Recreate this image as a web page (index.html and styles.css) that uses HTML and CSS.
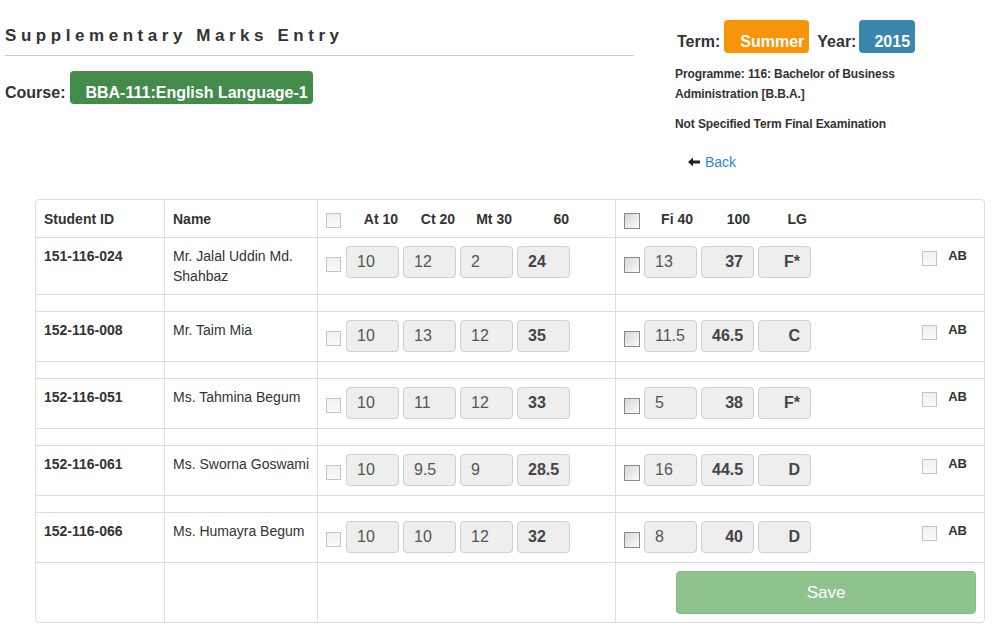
FILE: index.html
```html
<!DOCTYPE html>
<html>
<head>
<meta charset="utf-8">
<title>Supplementary Marks Entry</title>
<link rel="stylesheet" href="styles.css">
</head>
<body>
<div class="top">
  <div class="left">
    <h1 class="title">Supplementary Marks Entry</h1>
    <div class="course-row">
      <span class="course-label">Course:</span>
      <span class="badge badge-green">BBA-111:English Language-1</span>
    </div>
  </div>
  <div class="right">
    <div class="term-row">
      <span class="meta-label">Term:</span>
      <span class="badge badge-orange">Summer</span>
      <span class="meta-label year">Year:</span>
      <span class="badge badge-blue">2015</span>
    </div>
    <p class="info">Programme: 116: Bachelor of Business Administration [B.B.A.]</p>
    <p class="info exam">Not Specified Term Final Examination</p>
    <a class="back" href="#"><svg class="arrow" width="12" height="10" viewBox="0 0 12 10"><path d="M0 5 L5 0.5 L5 3.5 L12 3.5 L12 6.5 L5 6.5 L5 9.5 Z" fill="#222"/></svg>Back</a>
  </div>
</div>

<div class="table-wrap">
<table class="marks">
  <tr class="head">
    <th class="c1">Student ID</th>
    <th class="c2">Name</th>
    <th class="c3">
      <div class="cells">
        <span class="cb light"></span>
        <span class="hl">At 10</span><span class="hl">Ct 20</span><span class="hl">Mt 30</span><span class="hl">60</span>
      </div>
    </th>
    <th class="c4">
      <div class="cells">
        <span class="cb dark"></span>
        <span class="hl hl4">Fi 40</span><span class="hl hl4">100</span><span class="hl hl4">LG</span>
      </div>
    </th>
  </tr>

  <tr>
    <td class="sid">151-116-024</td>
    <td>Mr. Jalal Uddin Md. Shahbaz</td>
    <td><div class="cells"><span class="cb light mid"></span><span class="in">10</span><span class="in">12</span><span class="in">2</span><span class="in b">24</span></div></td>
    <td><div class="cells"><span class="cb dark mid"></span><span class="in">13</span><span class="in b r">37</span><span class="in b r">F*</span><span class="ab"><span class="cb light"></span><span class="ab-text">AB</span></span></div></td>
  </tr>
  <tr class="sep"><td></td><td></td><td></td><td></td></tr>

  <tr>
    <td class="sid">152-116-008</td>
    <td>Mr. Taim Mia</td>
    <td><div class="cells"><span class="cb light mid"></span><span class="in">10</span><span class="in">13</span><span class="in">12</span><span class="in b">35</span></div></td>
    <td><div class="cells"><span class="cb dark mid"></span><span class="in">11.5</span><span class="in b r">46.5</span><span class="in b r">C</span><span class="ab"><span class="cb light"></span><span class="ab-text">AB</span></span></div></td>
  </tr>
  <tr class="sep"><td></td><td></td><td></td><td></td></tr>

  <tr>
    <td class="sid">152-116-051</td>
    <td>Ms. Tahmina Begum</td>
    <td><div class="cells"><span class="cb light mid"></span><span class="in">10</span><span class="in">11</span><span class="in">12</span><span class="in b">33</span></div></td>
    <td><div class="cells"><span class="cb dark mid"></span><span class="in">5</span><span class="in b r">38</span><span class="in b r">F*</span><span class="ab"><span class="cb light"></span><span class="ab-text">AB</span></span></div></td>
  </tr>
  <tr class="sep"><td></td><td></td><td></td><td></td></tr>

  <tr>
    <td class="sid">152-116-061</td>
    <td class="nw">Ms. Sworna Goswami</td>
    <td><div class="cells"><span class="cb light mid"></span><span class="in">10</span><span class="in">9.5</span><span class="in">9</span><span class="in b">28.5</span></div></td>
    <td><div class="cells"><span class="cb dark mid"></span><span class="in">16</span><span class="in b r">44.5</span><span class="in b r">D</span><span class="ab"><span class="cb light"></span><span class="ab-text">AB</span></span></div></td>
  </tr>
  <tr class="sep"><td></td><td></td><td></td><td></td></tr>

  <tr>
    <td class="sid">152-116-066</td>
    <td>Ms. Humayra Begum</td>
    <td><div class="cells"><span class="cb light mid"></span><span class="in">10</span><span class="in">10</span><span class="in">12</span><span class="in b">32</span></div></td>
    <td><div class="cells"><span class="cb dark mid"></span><span class="in">8</span><span class="in b r">40</span><span class="in b r">D</span><span class="ab"><span class="cb light"></span><span class="ab-text">AB</span></span></div></td>
  </tr>

  <tr class="last">
    <td></td><td></td><td></td>
    <td><div class="save-row"><button class="save" type="button">Save</button></div></td>
  </tr>
</table>
</div>
</body>
</html>
```

FILE: styles.css
```css
* { box-sizing: border-box; }
html, body { margin: 0; padding: 0; background: #fff; }
body {
  font-family: "Liberation Sans", Arial, sans-serif;
  font-size: 14px;
  line-height: 20px;
  color: #333;
}

.top {
  display: flex;
  align-items: flex-start;
}
.left {
  width: 629px;
  margin-left: 5px;
}
.title {
  margin: 25px 0 0 0;
  padding-bottom: 8px;
  font-size: 17px;
  line-height: 22px;
  font-weight: bold;
  letter-spacing: 4.55px;
  color: #333;
  border-bottom: 1px solid #ccc;
}
.course-row {
  display: flex;
  align-items: baseline;
  margin-top: 15px;
}
.course-label {
  font-size: 16px;
  font-weight: bold;
  margin-right: 5px;
}
.badge {
  display: inline-block;
  height: 33px;
  line-height: 23px;
  padding: 10px 5px 0 15px;
  border-radius: 4px;
  color: #fff;
  font-size: 16px;
  font-weight: bold;
}
.badge-green { background: #438b4a; }
.badge-orange { background: #f8940a; padding-left: 16px; }
.badge-blue { background: #3a87ad; }

.right {
  margin-left: 41px;
  padding-top: 20px;
}
.term-row {
  display: flex;
  align-items: baseline;
  padding-left: 2px;
}
.meta-label {
  font-size: 16px;
  font-weight: bold;
  margin-right: 4px;
}
.meta-label.year { margin-left: 8px; margin-right: 3px; }
.info {
  margin: 11px 0 0 0;
  font-size: 12px;
  font-weight: bold;
  line-height: 20px;
  width: 240px;
  letter-spacing: -0.1px;
}
.info.exam { margin-top: 10px; }
.back {
  display: inline-flex;
  align-items: center;
  margin: 18px 0 0 13px;
  color: #2a8ad2;
  text-decoration: none;
  font-size: 14px;
  line-height: 20px;
}
.arrow { margin-right: 5px; }

.table-wrap {
  padding: 27px 0 0 35px;
}
.marks {
  width: 950px;
  table-layout: fixed;
  border-collapse: separate;
  border-spacing: 0;
  border: 1px solid #ddd;
  border-radius: 4px;
}
.marks th, .marks td {
  padding: 8px;
  text-align: left;
  vertical-align: top;
  border-left: 1px solid #ddd;
  border-top: 1px solid #ddd;
  line-height: 20px;
  font-size: 14px;
}
.marks th:first-child, .marks td:first-child { border-left: none; }
.marks tr:first-child th { border-top: none; padding-top: 9px; }
.marks th { font-weight: bold; }
.c1 { width: 128px; }
.c2 { width: 153px; }
.c3 { width: 298px; }
.sid { font-weight: bold; }
.nw { white-space: nowrap; }

.cells {
  display: flex;
  align-items: flex-start;
  min-height: 33px;
}
.head .cells { min-height: 20px; }
.cb {
  display: inline-block;
  width: 15px;
  height: 15px;
  margin-top: 5px;
  margin-right: 5px;
  flex: none;
}
.head .cb { margin-top: 4px; }
.cb.light {
  border: 1px solid #c4c4c4;
  background: linear-gradient(#f0f0f0, #fafafa);
}
.cb.dark {
  width: 16px;
  height: 16px;
  margin-right: 4px;
  border: 1px solid #8a8a8a;
  background: linear-gradient(135deg, #d6d6d6, #fbfbfb);
}
.cb.mid { margin-top: 11px; }
.hl {
  display: inline-block;
  width: 53px;
  margin-right: 4px;
  text-align: right;
  padding-right: 1px;
  font-size: 14px;
  font-weight: bold;
}
.hl4 { padding-right: 4px; }
.in {
  display: inline-block;
  width: 53px;
  height: 32px;
  margin-right: 4px;
  padding: 0 10px;
  line-height: 30px;
  border: 1px solid #cfcfcf;
  border-radius: 4px;
  background: #eee;
  color: #555;
  font-size: 16px;
  flex: none;
}
.in.b { font-weight: bold; color: #444; }
.in.r { text-align: right; }
.ab {
  display: flex;
  align-items: flex-start;
  margin-left: auto;
  margin-right: 9px;
}
.ab .cb { margin-right: 11px; }
.ab-text {
  font-size: 13px;
  font-weight: bold;
  line-height: 20px;
}
.save-row {
  display: flex;
  justify-content: flex-end;
}
.save {
  width: 300px;
  height: 43px;
  border: 1px solid #84bb84;
  border-radius: 4px;
  background: #8ec38e;
  color: #fff;
  font-family: "Liberation Sans", Arial, sans-serif;
  font-size: 17px;
  padding: 0;
}
```
